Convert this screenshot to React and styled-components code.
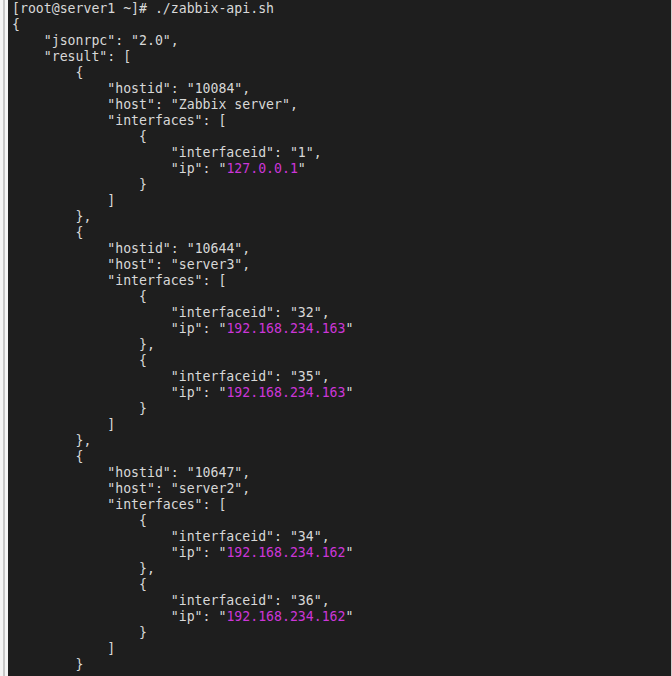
import React from "react";
import styled, { createGlobalStyle } from "styled-components";

const GlobalStyle = createGlobalStyle`
  html, body {
    margin: 0;
    padding: 0;
    background: #1e1e1e;
  }
`;

const Frame = styled.div`
  display: flex;
  width: 672px;
  height: 676px;
  overflow: hidden;
`;

const Gutter = styled.div`
  width: 8px;
  flex-shrink: 0;
  background: #f3f3f3;
  display: flex;
  .rule {
    margin-left: 3px;
    width: 2px;
    background: #c6c6c6;
  }
`;

const Terminal = styled.pre`
  flex: 1;
  margin: 0;
  padding: 1px 0 0 4px;
  background: #1e1e1e;
  color: #d8d8d8;
  font-family: "DejaVu Sans Mono", "Liberation Mono", monospace;
  font-size: 13.2px;
  line-height: 16px;
  border-right: 1px solid #cfcfcf;
`;

const Ip = styled.span`
  color: #cc36d8;
`;

const Line = ({ indent = 0, children }) => (
  <div>
    {" ".repeat(indent * 4)}
    {children}
  </div>
);

const IpLine = ({ indent, ip }) => (
  <Line indent={indent}>
    "ip": "<Ip>{ip}</Ip>"
  </Line>
);

const hosts = [
  { id: "10084", name: "Zabbix server", ifaces: [["1", "127.0.0.1"]] },
  {
    id: "10644",
    name: "server3",
    ifaces: [
      ["32", "192.168.234.163"],
      ["35", "192.168.234.163"],
    ],
  },
  {
    id: "10647",
    name: "server2",
    ifaces: [
      ["34", "192.168.234.162"],
      ["36", "192.168.234.162"],
    ],
  },
];

export default function App() {
  return (
    <Frame>
      <GlobalStyle />
      <Gutter>
        <div className="rule" />
      </Gutter>
      <Terminal>
        <Line>[root@server1 ~]# ./zabbix-api.sh</Line>
        <Line>{"{"}</Line>
        <Line indent={1}>"jsonrpc": "2.0",</Line>
        <Line indent={1}>"result": [</Line>
        {hosts.map((h, hi) => (
          <React.Fragment key={h.id}>
            <Line indent={2}>{"{"}</Line>
            <Line indent={3}>"hostid": "{h.id}",</Line>
            <Line indent={3}>"host": "{h.name}",</Line>
            <Line indent={3}>"interfaces": [</Line>
            {h.ifaces.map(([iid, ip], ii) => (
              <React.Fragment key={iid}>
                <Line indent={4}>{"{"}</Line>
                <Line indent={5}>"interfaceid": "{iid}",</Line>
                <IpLine indent={5} ip={ip} />
                <Line indent={4}>{ii < h.ifaces.length - 1 ? "}," : "}"}</Line>
              </React.Fragment>
            ))}
            <Line indent={3}>]</Line>
            <Line indent={2}>{hi < hosts.length - 1 ? "}," : "}"}</Line>
          </React.Fragment>
        ))}
      </Terminal>
    </Frame>
  );
}
